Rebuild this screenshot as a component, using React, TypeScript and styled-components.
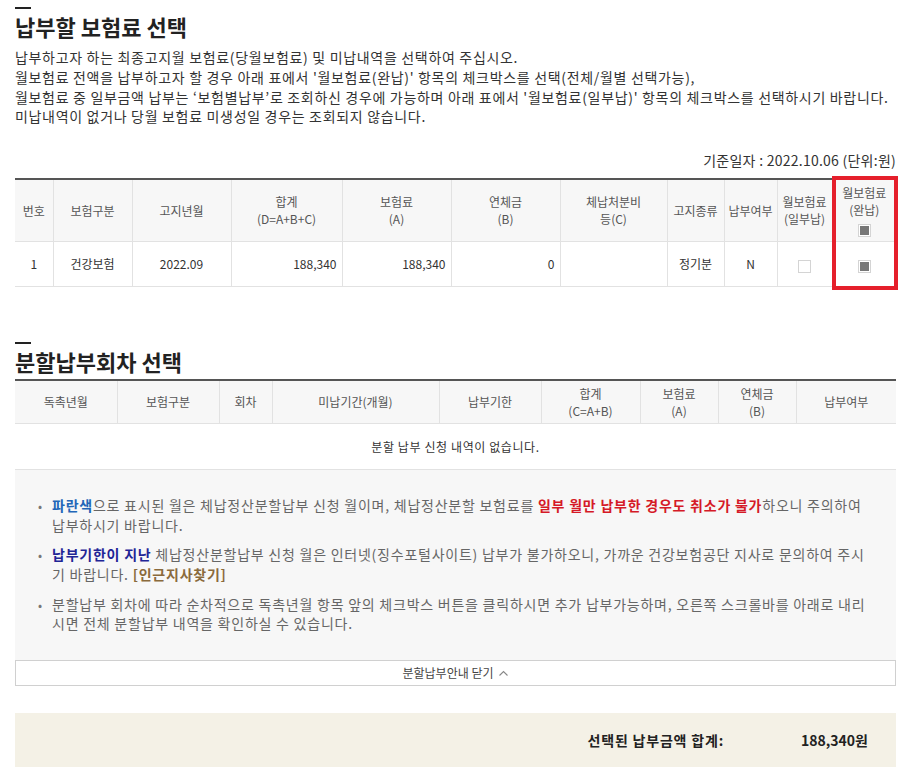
import styled, { createGlobalStyle } from 'styled-components'

const GlobalStyle = createGlobalStyle`
  html, body {
    margin: 0;
    padding: 0;
    background: #fff;
  }
  body {
    font-family: "Noto Sans CJK KR", "Noto Sans", sans-serif;
    color: #333;
  }
`

type Column = { width: number; label: string[] }

const billColumns: Column[] = [
  { width: 38, label: ['번호'] },
  { width: 79, label: ['보험구분'] },
  { width: 99, label: ['고지년월'] },
  { width: 111, label: ['합계', '(D=A+B+C)'] },
  { width: 109, label: ['보험료', '(A)'] },
  { width: 109, label: ['연체금', '(B)'] },
  { width: 107, label: ['체납처분비', '등(C)'] },
  { width: 57, label: ['고지종류'] },
  { width: 53, label: ['납부여부'] },
  { width: 55, label: ['월보험료', '(일부납)'] },
  { width: 64, label: ['월보험료', '(완납)'] },
]

const splitColumns: Column[] = [
  { width: 102, label: ['독촉년월'] },
  { width: 102, label: ['보험구분'] },
  { width: 53, label: ['회차'] },
  { width: 167, label: ['미납기간(개월)'] },
  { width: 102, label: ['납부기한'] },
  { width: 99, label: ['합계', '(C=A+B)'] },
  { width: 78, label: ['보험료', '(A)'] },
  { width: 78, label: ['연체금', '(B)'] },
  { width: 100, label: ['납부여부'] },
]

const renderLabel = (label: string[]) =>
  label.map((line, i) => (
    <span key={line}>
      {i > 0 && <br />}
      {line}
    </span>
  ))

const App = () => {
  return (
    <Page>
      <GlobalStyle />
      <Section>
        <HeadingBar />
        <Title>납부할 보험료 선택</Title>
        <Description>
          납부하고자 하는 최종고지월 보험료(당월보험료) 및 미납내역을 선택하여 주십시오.
          <br />
          월보험료 전액을 납부하고자 할 경우 아래 표에서 '월보험료(완납)' 항목의 체크박스를 선택(전체/월별 선택가능),
          <br />
          월보험료 중 일부금액 납부는 ‘보험별납부’로 조회하신 경우에 가능하며 아래 표에서 '월보험료(일부납)' 항목의 체크박스를 선택하시기 바랍니다.
          <br />
          미납내역이 없거나 당월 보험료 미생성일 경우는 조회되지 않습니다.
        </Description>
        <BaseDate>기준일자 : 2022.10.06 (단위:원)</BaseDate>
        <TableWrap>
          <Table>
            <colgroup>
              {billColumns.map((c, i) => (
                <col key={i} width={c.width} />
              ))}
            </colgroup>
            <thead>
              <HeadRow $height={62}>
                {billColumns.map((c, i) => (
                  <Th key={i}>
                    {renderLabel(c.label)}
                    {i === billColumns.length - 1 && (
                      <>
                        <br />
                        <CheckBox $checked />
                      </>
                    )}
                  </Th>
                ))}
              </HeadRow>
            </thead>
            <tbody>
              <BodyRow $height={45}>
                <Td>1</Td>
                <Td>건강보험</Td>
                <Td>2022.09</Td>
                <Td $align="right">188,340</Td>
                <Td $align="right">188,340</Td>
                <Td $align="right">0</Td>
                <Td />
                <Td>정기분</Td>
                <Td>N</Td>
                <Td>
                  <CheckBox />
                </Td>
                <Td>
                  <CheckBox $checked />
                </Td>
              </BodyRow>
            </tbody>
          </Table>
          <Highlight />
        </TableWrap>
      </Section>

      <Section $gap={55}>
        <HeadingBar />
        <Title>분할납부회차 선택</Title>
        <Table $top={3}>
          <colgroup>
            {splitColumns.map((c, i) => (
              <col key={i} width={c.width} />
            ))}
          </colgroup>
          <thead>
            <HeadRow $height={44}>
              {splitColumns.map((c, i) => (
                <Th key={i}>{renderLabel(c.label)}</Th>
              ))}
            </HeadRow>
          </thead>
          <tbody>
            <BodyRow $height={46}>
              <EmptyCell colSpan={splitColumns.length}>분할 납부 신청 내역이 없습니다.</EmptyCell>
            </BodyRow>
          </tbody>
        </Table>

        <Guide>
          <GuideItem>
            <Blue>파란색</Blue>으로 표시된 월은 체납정산분할납부 신청 월이며, 체납정산분할 보험료를{' '}
            <Red>일부 월만 납부한 경우도 취소가 불가</Red>하오니 주의하여
            <br />
            납부하시기 바랍니다.
          </GuideItem>
          <GuideItem>
            <Navy>납부기한이 지난</Navy> 체납정산분할납부 신청 월은 인터넷(징수포털사이트) 납부가 불가하오니, 가까운 건강보험공단 지사로 문의하여 주시
            <br />
            기 바랍니다. <Brown>[인근지사찾기]</Brown>
          </GuideItem>
          <GuideItem>
            분할납부 회차에 따라 순차적으로 독촉년월 항목 앞의 체크박스 버튼을 클릭하시면 추가 납부가능하며, 오른쪽 스크롤바를 아래로 내리
            <br />
            시면 전체 분할납부 내역을 확인하실 수 있습니다.
          </GuideItem>
        </Guide>
        <ToggleButton type="button">
          분할납부안내 닫기
          <svg width="11" height="8" viewBox="0 0 11 8" aria-hidden="true">
            <polyline points="1.5,6.5 5.5,2.5 9.5,6.5" fill="none" stroke="#888" strokeWidth="1.1" />
          </svg>
        </ToggleButton>
      </Section>

      <Summary>
        <SummaryLabel>선택된 납부금액 합계:</SummaryLabel>
        <SummaryValue>188,340원</SummaryValue>
      </Summary>
    </Page>
  )
}

const Page = styled.div`
  width: 881px;
  padding: 0 12px 16px 15px;
`

const Section = styled.section<{ $gap?: number }>`
  display: flex;
  flex-direction: column;
  margin-top: ${({ $gap }) => $gap ?? 7}px;
`

const HeadingBar = styled.div`
  width: 16px;
  height: 2px;
  background: #222;
`

const Title = styled.h2`
  margin: 2px 0 0;
  font-size: 22px;
  line-height: 30px;
  font-weight: 700;
  color: #222;
`

const Description = styled.p`
  margin: 7px 0 0;
  font-size: 14px;
  line-height: 19.8px;
  letter-spacing: 0.68px;
  color: #333;
  white-space: nowrap;
`

const BaseDate = styled.div`
  margin-top: 23px;
  text-align: right;
  font-size: 14px;
  line-height: 20px;
  letter-spacing: 0.25px;
  color: #333;
`

const TableWrap = styled.div`
  position: relative;
  margin-top: 8px;
`

const Highlight = styled.div`
  position: absolute;
  top: -2px;
  right: -2px;
  width: 66px;
  height: 114px;
  box-sizing: border-box;
  border: 4px solid #e51f2b;
  pointer-events: none;
`

const Table = styled.table<{ $top?: number }>`
  width: 100%;
  margin-top: ${({ $top }) => $top ?? 0}px;
  border-collapse: collapse;
  table-layout: fixed;
  border-top: 2px solid #555;
  font-size: 12px;
`

const HeadRow = styled.tr<{ $height: number }>`
  height: ${({ $height }) => $height}px;
  background: #f7f7f7;
`

const BodyRow = styled.tr<{ $height: number }>`
  height: ${({ $height }) => $height}px;
`

const Th = styled.th`
  padding: 0 2px;
  font-weight: 400;
  line-height: 17px;
  color: #555;
  text-align: center;
  vertical-align: middle;
  border-left: 1px solid #e2e2e2;
  border-bottom: 1px solid #e2e2e2;

  &:first-child {
    border-left: none;
  }
`

const Td = styled.td<{ $align?: 'left' | 'right' | 'center' }>`
  padding: 0 5px;
  line-height: 17px;
  color: #333;
  text-align: ${({ $align }) => $align ?? 'center'};
  vertical-align: middle;
  border-left: 1px solid #e2e2e2;
  border-bottom: 1px solid #e2e2e2;

  &:first-child {
    border-left: none;
  }
`

const EmptyCell = styled(Td)`
  letter-spacing: 0.6px;
`

const CheckBox = styled.span<{ $checked?: boolean }>`
  display: inline-flex;
  align-items: center;
  justify-content: center;
  width: 13px;
  height: 13px;
  box-sizing: border-box;
  margin-top: 2px;
  border: 1px solid #d4d4d4;
  background: #fff;
  vertical-align: middle;

  &::after {
    content: '';
    display: ${({ $checked }) => ($checked ? 'block' : 'none')};
    width: 9px;
    height: 9px;
    background: #777;
  }
`

const Guide = styled.ul`
  display: flex;
  flex-direction: column;
  gap: 10px;
  margin: 0;
  padding: 26px 10px 26px 23px;
  list-style: none;
  background: #f7f7f7;
`

const GuideItem = styled.li`
  position: relative;
  padding-left: 14px;
  font-size: 14px;
  line-height: 19.6px;
  letter-spacing: 0.76px;
  color: #666;
  white-space: nowrap;

  &::before {
    content: '•';
    position: absolute;
    left: 0;
    top: 0;
    font-size: 12px;
    color: #777;
  }
`

const Blue = styled.strong`
  color: #2266b8;
`

const Navy = styled.strong`
  color: #1f2596;
`

const Red = styled.strong`
  color: #d51a27;
`

const Brown = styled.strong`
  color: #8a6a3c;
`

const ToggleButton = styled.button`
  display: flex;
  align-items: center;
  justify-content: center;
  gap: 4px;
  height: 26px;
  margin: 0;
  padding: 0;
  border: 1px solid #d0d0d0;
  background: #fff;
  font-family: inherit;
  font-size: 12px;
  color: #444;
  cursor: pointer;
`

const Summary = styled.div`
  display: flex;
  justify-content: flex-end;
  align-items: center;
  gap: 77px;
  height: 54px;
  margin-top: 27px;
  padding-right: 28px;
  background: #f4f1e6;
  font-size: 14px;
  font-weight: 700;
  color: #222;
`

const SummaryLabel = styled.span`
  letter-spacing: 0.8px;
`

const SummaryValue = styled.span``

export default App
